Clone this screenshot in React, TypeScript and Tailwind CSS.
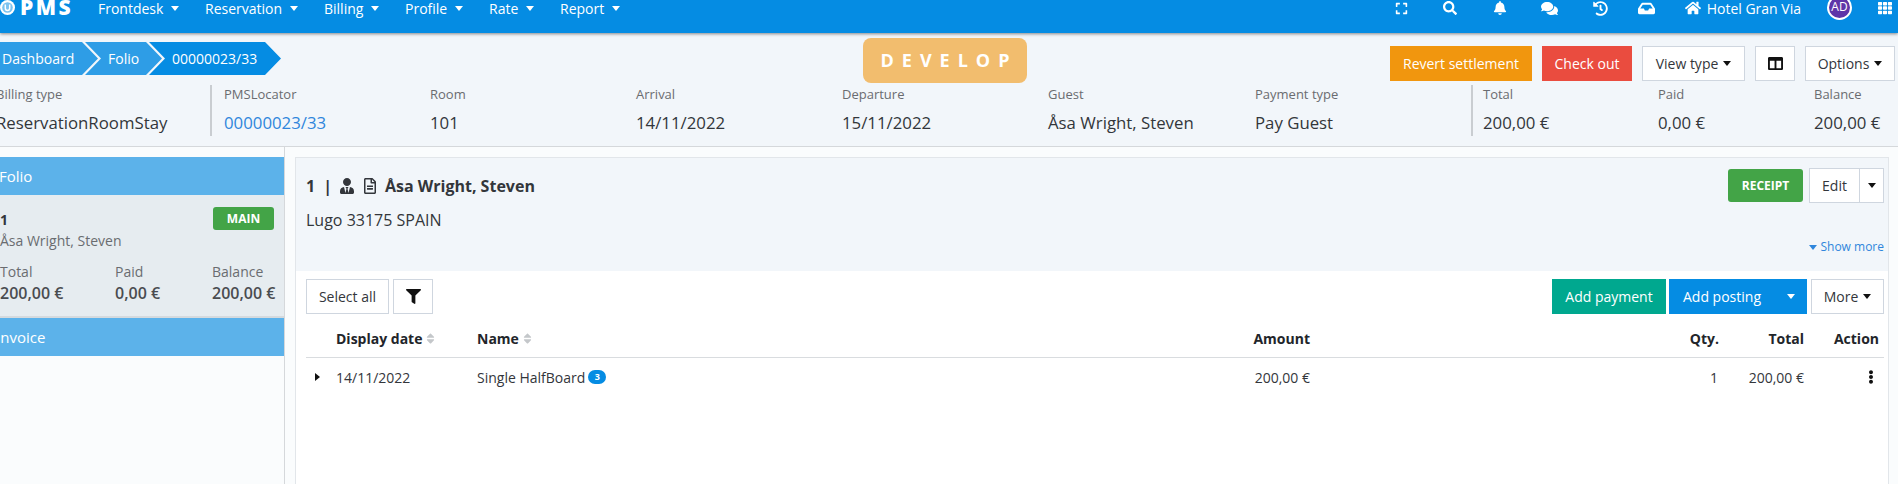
import { FaBell, FaColumns, FaComments, FaEllipsisV, FaExpand, FaFilter, FaHistory, FaHome, FaInbox, FaRegFileAlt, FaSearch, FaSort, FaTh, FaUserTie } from 'react-icons/fa'

const Caret = ({ className = 'border-t-white' }: { className?: string }) => (
  <span className={`inline-block w-0 h-0 border-x-[4.5px] border-x-transparent border-t-[5px] ${className}`} />
)

const menu = [
  { label: 'Frontdesk', width: 'w-[107px]' },
  { label: 'Reservation', width: 'w-[119px]' },
  { label: 'Billing', width: 'w-[81px]' },
  { label: 'Profile', width: 'w-[84px]' },
  { label: 'Rate', width: 'w-[71px]' },
  { label: 'Report', width: 'w-[80px]' },
]

const NavBar = () => (
  <nav className="h-[33px] shrink-0 bg-[#058ce3] shadow-[0_1px_3px_rgba(0,0,0,0.45)] flex items-start text-white text-[14px] relative z-10">
    <div className="w-[98px] flex items-center h-[15px] gap-[5px]">
      <svg width="15" height="15" viewBox="0 0 13 13" className="shrink-0">
        <circle cx="6.5" cy="6.5" r="6.5" fill="#fff" />
        <circle cx="6.5" cy="6.5" r="4.6" fill="#7cc3f0" />
        <path d="M4.6 4v3.2a1.9 1.9 0 0 0 3.8 0V4" fill="none" stroke="#fff" strokeWidth="1.3" />
      </svg>
      <span className="font-extrabold text-[21px] tracking-[2.5px] leading-[15px]">PMS</span>
    </div>
    {menu.map((m) => (
      <div key={m.label} className={`${m.width} h-[16px] flex items-center gap-[8px]`}>
        <span>{m.label}</span>
        <Caret />
      </div>
    ))}
    <div className="ml-auto flex items-center h-[16px]">
      <FaExpand className="text-[13px] mr-[35px]" />
      <FaSearch className="text-[14px] mr-[36px]" />
      <FaBell className="text-[14px] mr-[34px]" />
      <FaComments className="text-[17px] mr-[35px]" />
      <FaHistory className="text-[15px] mr-[30px]" />
      <FaInbox className="text-[17px] mr-[30px]" />
      <FaHome className="text-[16px] mr-[6px]" />
      <span className="mr-[26px]">Hotel Gran Via</span>
      <span className="w-[25px] h-[25px] rounded-full bg-[#5e35a8] border-2 border-white text-[12px] flex items-center justify-center mr-[26px] -mt-[2px]">AD</span>
      <FaTh className="text-[14px] mr-[6px]" />
    </div>
  </nav>
)

const Crumb = ({ label, width, active }: { label: string; width: string; active?: boolean }) => (
  <div
    className={`${width} h-[33px] shrink-0 flex items-center text-white text-[14px] pl-[23px] -mr-[13px] [clip-path:polygon(0_0,calc(100%-16px)_0,100%_50%,calc(100%-16px)_100%,0_100%,16px_50%)] ${active ? 'bg-[#058ce3]' : 'bg-[#2e9de6]'}`}
  >
    {label}
  </div>
)

const infoCols = [
  { label: 'PMSLocator', value: '00000023/33', link: true, width: 'w-[206px]' },
  { label: 'Room', value: '101', width: 'w-[206px]' },
  { label: 'Arrival', value: '14/11/2022', width: 'w-[206px]' },
  { label: 'Departure', value: '15/11/2022', width: 'w-[206px]' },
  { label: 'Guest', value: 'Åsa Wright, Steven', width: 'w-[207px]' },
  { label: 'Payment type', value: 'Pay Guest', width: 'w-[216px]' },
]

const InfoCol = ({ label, value, link, width }: { label: string; value: string; link?: boolean; width: string }) => (
  <div className={width}>
    <div className="text-[13px] leading-[18px] text-[#6a6c70]">{label}</div>
    <div className={`text-[16.8px] leading-[22px] mt-[9px] ${link ? 'text-[#2f86dc]' : 'text-[#33363b]'}`}>{value}</div>
  </div>
)

const WhiteBtn = ({ children, className = '' }: { children: React.ReactNode; className?: string }) => (
  <button className={`h-[35px] bg-white border border-[#cfd6df] text-[#33363b] text-[14px] flex items-center justify-center gap-[5px] ${className}`}>
    {children}
  </button>
)

const Header = () => (
  <header className="h-[114px] shrink-0 bg-[#f2f6fa] border-b border-[#d5d8db] relative">
    <div className="flex items-start pt-[9px] -ml-[21px]">
      <Crumb label="Dashboard" width="w-[119px]" />
      <Crumb label="Folio" width="w-[77px]" />
      <Crumb label="00000023/33" width="w-[132px]" active />
    </div>
    <div className="absolute left-[863px] top-[5px] w-[164px] h-[45px] pl-[8px] rounded-[8px] bg-[#f2bd6e] text-white font-bold text-[18px] tracking-[8px] flex items-center justify-center">
      DEVELOP
    </div>
    <div className="absolute right-[3px] top-[13px] flex items-center gap-[10px]">
      <button className="h-[35px] w-[142px] bg-[#f1960e] text-white text-[14px]">Revert settlement</button>
      <button className="h-[35px] w-[90px] bg-[#ea4c3f] text-white text-[14px]">Check out</button>
      <WhiteBtn className="w-[103px]">View type <Caret className="border-t-[#111]" /></WhiteBtn>
      <WhiteBtn className="w-[40px]"><FaColumns className="text-[15px] text-[#111]" /></WhiteBtn>
      <WhiteBtn className="w-[90px]">Options <Caret className="border-t-[#111]" /></WhiteBtn>
    </div>
    <div className="flex items-start -ml-[4px] mt-[10px]">
      <div className="w-[217px] h-[51px] border-r-2 border-[#c9cdd1]">
        <div className="text-[13px] leading-[18px] text-[#6a6c70]">Billing type</div>
        <div className="text-[16.8px] leading-[22px] mt-[9px] text-[#33363b]">ReservationRoomStay</div>
      </div>
      <div className="flex pl-[12px]">
        {infoCols.map((c) => <InfoCol key={c.label} {...c} />)}
      </div>
      <div className="flex h-[51px] border-l-2 border-[#c9cdd1] pl-[10px]">
        <InfoCol label="Total" value="200,00 €" width="w-[175px]" />
        <InfoCol label="Paid" value="0,00 €" width="w-[156px]" />
        <InfoCol label="Balance" value="200,00 €" width="w-[84px]" />
      </div>
    </div>
  </header>
)

const FolioStat = ({ label, value, width }: { label: string; value: string; width: string }) => (
  <div className={width}>
    <div className="text-[14px] text-[#6a6c70] leading-[18px]">{label}</div>
    <div className="text-[16px] font-semibold text-[#4a4c50] leading-[22px] mt-[1px]">{value}</div>
  </div>
)

const Sidebar = () => (
  <aside className="w-[286px] shrink-0 border-r border-[#d5d8db] pt-[10px] -ml-[1px]">
    <div className="h-[38px] bg-[#5cb2ea] text-white text-[15px] flex items-center">Folio</div>
    <div className="h-[123px] bg-[#e6ecf0] border-b-2 border-[#d5dade] relative pt-[14px] pl-[1px]">
      <span className="absolute right-[10px] top-[12px] w-[61px] h-[23px] rounded-[3px] bg-[#43a447] text-white font-bold text-[12px] flex items-center justify-center">MAIN</span>
      <div className="text-[14px] font-bold text-[#33363b] leading-[22px]">1</div>
      <div className="text-[14px] text-[#6a6c70] leading-[20px]">Åsa Wright, Steven</div>
      <div className="flex mt-[12px]">
        <FolioStat label="Total" value="200,00 €" width="w-[115px]" />
        <FolioStat label="Paid" value="0,00 €" width="w-[97px]" />
        <FolioStat label="Balance" value="200,00 €" width="w-[70px]" />
      </div>
    </div>
    <div className="h-[38px] bg-[#5cb2ea] text-white text-[15px] flex items-center -ml-[3px]">Invoice</div>
  </aside>
)

const FolioCard = () => (
  <section className="h-[114px] shrink-0 bg-[#f2f6fa] border-t border-[#e2e6ea] pl-[10px] pr-[4px] relative">
    <div className="absolute right-[4px] top-[10px] flex items-center">
      <span className="w-[75px] h-[33px] mr-[6px] rounded-[3px] bg-[#43a447] text-white font-bold text-[12px] flex items-center justify-center">RECEIPT</span>
      <div className="h-[35px] w-[75px] flex bg-white border border-[#cfd6df]">
        <span className="w-[50px] border-r border-[#cfd6df] text-[14px] text-[#33363b] flex items-center justify-center">Edit</span>
        <span className="flex-1 flex items-center justify-center"><Caret className="border-t-[#111]" /></span>
      </div>
    </div>
    <div className="flex items-center text-[16px] font-bold text-[#33363b] h-[22px] mt-[17px]">
      <span>1</span>
      <span className="ml-[8px]">|</span>
      <FaUserTie className="text-[16px] ml-[7px]" />
      <FaRegFileAlt className="text-[16px] ml-[7px]" />
      <span className="ml-[7px]">Åsa Wright, Steven</span>
    </div>
    <div className="text-[16px] text-[#33363b] leading-[20px] mt-[13px]">Lugo 33175 SPAIN</div>
    <div className="absolute right-[4px] bottom-[15px] text-[12px] text-[#2f86dc] flex items-center gap-[3px]">
      <Caret className="border-t-[#2f86dc]" /> Show more
    </div>
  </section>
)

const Toolbar = () => (
  <div className="flex items-center pl-[10px] pr-[4px] mt-[8px]">
    <WhiteBtn className="w-[83px] mr-[4px]">Select all</WhiteBtn>
    <WhiteBtn className="w-[40px]"><FaFilter className="text-[15px] text-[#111]" /></WhiteBtn>
    <button className="ml-auto h-[35px] w-[114px] bg-[#00a88f] text-white text-[14px] mr-[3px]">Add payment</button>
    <button className="h-[35px] w-[138px] bg-[#058ce3] text-white text-[14px] mr-[4px] flex items-center justify-between pl-[14px] pr-[12px]">
      Add posting <Caret />
    </button>
    <WhiteBtn className="w-[73px]">More <Caret className="border-t-[#111]" /></WhiteBtn>
  </div>
)

const SortIcon = () => <FaSort className="text-[13px] text-[#c4c7ca]" />

const FolioTable = () => (
  <div className="ml-[10px] mr-[4px] mt-[9px] text-[14px] text-[#33363b]">
    <div className="h-[35px] pb-[3px] border-b border-[#d9dcdf] flex items-center font-bold text-[#22252a]">
      <div className="w-[30px]" />
      <div className="w-[141px] flex items-center gap-[2px]">Display date <SortIcon /></div>
      <div className="w-[644px] flex items-center gap-[2px]">Name <SortIcon /></div>
      <div className="w-[189px] text-right">Amount</div>
      <div className="w-[409px] text-right">Qty.</div>
      <div className="w-[85px] text-right">Total</div>
      <div className="flex-1 text-right pr-[5px]">Action</div>
    </div>
    <div className="h-[38px] flex items-center">
      <div className="w-[30px] pl-[9px]">
        <span className="block w-0 h-0 border-y-[4px] border-y-transparent border-l-[5px] border-l-[#111]" />
      </div>
      <div className="w-[141px]">14/11/2022</div>
      <div className="w-[644px] flex items-center gap-[3px]">
        Single HalfBoard
        <span className="w-[18px] h-[14px] rounded-full bg-[#058ce3] text-white text-[9px] font-bold flex items-center justify-center">3</span>
      </div>
      <div className="w-[189px] text-right">200,00 €</div>
      <div className="w-[409px] text-right pr-[1px]">1</div>
      <div className="w-[85px] text-right">200,00 €</div>
      <div className="flex-1 flex justify-end pr-[6px]"><FaEllipsisV className="text-[14px] text-[#111]" /></div>
    </div>
  </div>
)

export default function App() {
  return (
    <div className="w-[1898px] h-[484px] overflow-hidden bg-white flex flex-col [font-family:'Open_Sans',sans-serif]">
      <NavBar />
      <Header />
      <div className="flex flex-1 bg-[#fafcfd]">
        <Sidebar />
        <main className="flex-1 bg-white ml-[10px] mr-[9px] mt-[10px] border-l border-r border-[#e2e6ea]">
          <FolioCard />
          <Toolbar />
          <FolioTable />
        </main>
      </div>
    </div>
  )
}
